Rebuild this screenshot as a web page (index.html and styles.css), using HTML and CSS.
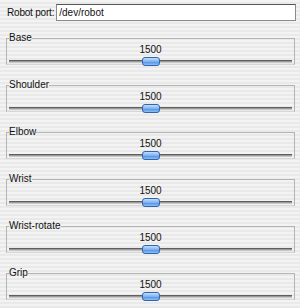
FILE: index.html
```html
<!DOCTYPE html>
<html lang="en">
<head>
    <meta charset="UTF-8">
    <title>Robot Arm</title>
    <link rel="stylesheet" href="styles.css">
</head>
<body>
    <div class="port-row">
        <label for="port">Robot port:</label>
        <input type="text" id="port" value="/dev/robot">
    </div>

    <fieldset class="group">
        <legend>Base</legend>
        <div class="value">1500</div>
        <div class="slider"><span class="thumb"></span></div>
    </fieldset>
    <fieldset class="group">
        <legend>Shoulder</legend>
        <div class="value">1500</div>
        <div class="slider"><span class="thumb"></span></div>
    </fieldset>
    <fieldset class="group">
        <legend>Elbow</legend>
        <div class="value">1500</div>
        <div class="slider"><span class="thumb"></span></div>
    </fieldset>
    <fieldset class="group">
        <legend>Wrist</legend>
        <div class="value">1500</div>
        <div class="slider"><span class="thumb"></span></div>
    </fieldset>
    <fieldset class="group">
        <legend>Wrist-rotate</legend>
        <div class="value">1500</div>
        <div class="slider"><span class="thumb"></span></div>
    </fieldset>
    <fieldset class="group">
        <legend>Grip</legend>
        <div class="value">1500</div>
        <div class="slider"><span class="thumb"></span></div>
    </fieldset>
</body>
</html>
```

FILE: styles.css
```css
body {
    margin: 0;
    width: 300px;
    height: 308px;
    overflow: hidden;
    font-family: "Liberation Sans", Arial, sans-serif;
    font-size: 10px;
    color: #111;
    background: repeating-linear-gradient(#f3f3f3 0, #f3f3f3 2px, #e9e9e9 2px, #e9e9e9 4px);
}
.port-row {
    display: flex;
    align-items: center;
    height: 24px;
    padding: 0 4px 0 7px;
}
.port-row label {
    margin-right: 2px;
    letter-spacing: -0.2px;
}
.port-row input {
    flex: 1;
    height: 17px;
    margin: 0;
    padding: 0 2px;
    box-sizing: border-box;
    border: 1px solid #8a8a8a;
    border-top-color: #555;
    background: #fff;
    font: inherit;
    color: #111;
    outline: none;
}
.group {
    margin: 8px 5px 0 6px;
    padding: 0 2px;
    height: 33px;
    box-sizing: border-box;
    border: 1px solid #b4b4b4;
    border-bottom-color: #d6d6d6;
}
.group + .group {
    margin-top: 14px;
}
.group legend {
    padding: 0;
    margin-left: 0;
    line-height: 12px;
}
.value {
    text-align: center;
    line-height: 12px;
    margin-top: 0;
}
.slider {
    display: flex;
    justify-content: center;
    align-items: center;
    height: 11px;
    background: linear-gradient(#9a9a9a, #9a9a9a) no-repeat center / 100% 1px,
                linear-gradient(#5f5f5f, #5f5f5f) no-repeat center 4px / 100% 1px,
                linear-gradient(#c8c8c8, #c8c8c8) no-repeat center 6px / 100% 1px;
}
.thumb {
    width: 16px;
    height: 7px;
    border: 1px solid #2f64b0;
    border-radius: 3px;
    background: linear-gradient(#c4defa, #7fb2ee 50%, #4d8ee0 51%, #8cc0f5);
}
```
